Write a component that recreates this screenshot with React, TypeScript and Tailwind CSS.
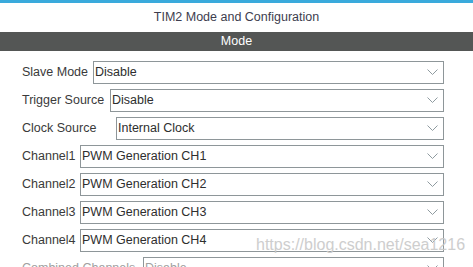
import React from "react";

type Row = { label: string; value: string; labelW: string; disabled?: boolean };

const rows: Row[] = [
  { label: "Slave Mode", value: "Disable", labelW: "w-[71px]" },
  { label: "Trigger Source", value: "Disable", labelW: "w-[88px]" },
  { label: "Clock Source", value: "Internal Clock", labelW: "w-[94px]" },
  { label: "Channel1", value: "PWM Generation CH1", labelW: "w-[58px]" },
  { label: "Channel2", value: "PWM Generation CH2", labelW: "w-[58px]" },
  { label: "Channel3", value: "PWM Generation CH3", labelW: "w-[58px]" },
  { label: "Channel4", value: "PWM Generation CH4", labelW: "w-[58px]" },
  { label: "Combined Channels", value: "Disable", labelW: "w-[121px]", disabled: true },
];

function Chevron() {
  return (
    <svg width="11" height="7" viewBox="0 0 11 7" className="shrink-0">
      <polyline points="0.5,0.5 5.5,5.5 10.5,0.5" fill="none" stroke="#8f9ba0" strokeWidth="1" />
    </svg>
  );
}

export default function App() {
  return (
    <div
      className="relative w-[473px] h-[267px] overflow-hidden bg-white text-[12.5px] leading-none"
      style={{ fontFamily: '"Liberation Sans", Arial, sans-serif' }}
    >
      <div className="h-[3px] bg-[#3aaadc]" />
      <div className="h-[29px] flex items-center justify-center text-[#3d3d4e]">
        TIM2 Mode and Configuration
      </div>
      <div className="h-[19px] flex items-center justify-center bg-[#545655] text-white">
        Mode
      </div>

      <div className="flex flex-col gap-[5px] pt-[10px] pl-[22px] pr-[29px]">
        {rows.map((r) => (
          <div key={r.label} className="flex items-center h-[23px]">
            <div
              className={`${r.labelW} shrink-0 whitespace-nowrap ${
                r.disabled ? "text-[#a0a0a0]" : "text-[#3a3a3a]"
              }`}
            >
              {r.label}
            </div>
            <div className="flex-1 h-[23px] flex items-center justify-between border border-[#8e9699] pl-[1px] pr-[5px] text-[#2e2e2e]">
              <span className={r.disabled ? "text-[#a0a0a0]" : ""}>{r.value}</span>
              <Chevron />
            </div>
          </div>
        ))}
      </div>

      <div className="absolute left-[256px] top-[237px] text-[16px] text-[#c9c9c9] opacity-90 whitespace-nowrap">
        https://blog.csdn.net/sea1216
      </div>
    </div>
  );
}
